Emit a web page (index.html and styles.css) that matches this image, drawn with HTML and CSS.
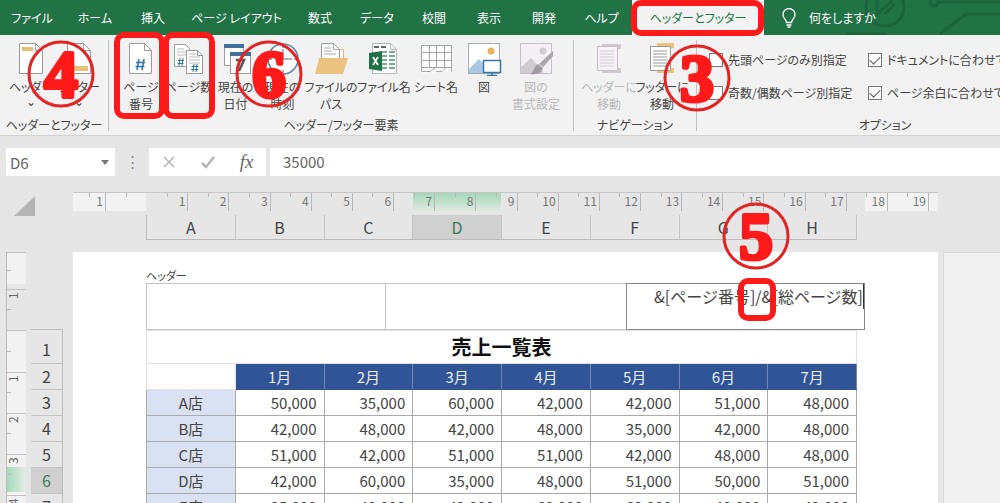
FILE: index.html
```html
<!DOCTYPE html>
<html lang="ja">
<head>
<meta charset="utf-8">
<title>売上一覧表</title>
<link rel="stylesheet" href="styles.css">
</head>
<body>
<div class="app">
  <header class="tabbar">
    <svg class="circuit" viewBox="0 0 160 35" aria-hidden="true"><g fill="none" stroke="#1c653c" stroke-width="3"><circle cx="45" cy="7" r="19"/><path d="M37 0v14l16-14M45 14l10-10M98 2h66M6 34h40M100 34l26-20h34"/><circle cx="94" cy="2" r="4"/></g></svg>
    <nav class="tabs">
      <button>ファイル</button><button>ホーム</button><button>挿入</button><button>ページ レイアウト</button><button>数式</button><button>データ</button><button>校閲</button><button>表示</button><button>開発</button><button>ヘルプ</button><button class="active">ヘッダーとフッター</button>
    </nav>
    <button class="tell">
      <svg width="14" height="20" viewBox="0 0 14 20"><path d="M4.500 14.500c0-3-3.500-4-3.500-8a6 6 0 0 1 12 0c0 4-3.500 5-3.500 8zM4.500 17h5M5.500 19h3" fill="none" stroke="#fff" stroke-width="1.300"/></svg>
      何をしますか
    </button>
  </header>

  <section class="ribbon">
    <div class="group">
      <div class="tools g1">
        <button><svg viewBox="0 0 36 34"><path d="M6.500 1.500h16l7 7v23h-23z" fill="#fff" stroke="#9a9a9a"/><path d="M22.500 1.500v7h7" fill="none" stroke="#9a9a9a"/><path d="M9 5h11v4H9z" fill="#e8bf74"/></svg>ヘッダー<i>⌄</i></button>
        <button><svg viewBox="0 0 36 34"><path d="M6.500 1.500h16l7 7v23h-23z" fill="#fff" stroke="#9a9a9a"/><path d="M22.500 1.500v7h7" fill="none" stroke="#9a9a9a"/><path d="M9 24h18v5H9z" fill="#e8bf74"/></svg>フッター<i>⌄</i></button>
      </div>
      <div class="caption">ヘッダーとフッター</div>
    </div>
    <div class="group">
      <div class="tools g2">
        <button><svg viewBox="0 0 36 34"><path d="M6.500 1.500h15l7 7v23h-22z" fill="#fff" stroke="#9a9a9a"/><path d="M21.500 1.500v7h7" fill="none" stroke="#9a9a9a"/><path d="M16 17l-2 11M21 17l-2 11M13 20.500h9M12.500 24.500h9" stroke="#2f75a8" stroke-width="1.500"/></svg>ページ<br>番号</button>
        <button><svg viewBox="0 0 36 34"><path d="M3.500 2.500h11l4 4v18h-15z" fill="#fff" stroke="#9a9a9a"/><path d="M6 7h7M6 10h9M6 13h9" stroke="#bbb"/><path d="M9 16l-1 8M12 16l-1 8M7 18.500h6M6.500 21.500h6" stroke="#2f75a8"/><path d="M15.500 8.500h11l5 5v18h-16z" fill="#fff" stroke="#9a9a9a"/><path d="M26.500 8.500v5h5" fill="none" stroke="#9a9a9a"/><path d="M18 12h7M18 15h11M18 18h11M18 21h11" stroke="#bbb"/><path d="M23 22l-1 8M26 22l-1 8M20.500 24.500h7M20 27.500h7" stroke="#2f75a8"/></svg>ページ数</button>
        <button><svg viewBox="0 0 36 34"><path d="M6.500 2.500h19v21h-19z" fill="#fff" stroke="#9a9a9a"/><path d="M6 2h20v4H6z" fill="#41719c"/><path d="M12.500 10.500h20v21h-20z" fill="#fff" stroke="#9a9a9a"/><path d="M12 10h21v4H12z" fill="#41719c"/><path d="M18 18h8l-5 11" fill="none" stroke="#555" stroke-width="2.500"/></svg>現在の<br>日付</button>
        <button><svg viewBox="0 0 36 34"><circle cx="18" cy="17" r="15" fill="#fff" stroke="#5c86ad" stroke-width="1.500"/><path d="M18 7v10h9M18 3v3M18 28v3M4 17h3M29 17h3" fill="none" stroke="#666"/></svg>現在の<br>時刻</button>
        <button><svg viewBox="0 0 36 34"><path d="M20.500 7.500h10v20h-10z" fill="#fff" stroke="#e0b878"/><path d="M8.500 1.500h12l6 6v17h-18z" fill="#fff" stroke="#9a9a9a"/><path d="M20.500 1.500v6h6M11 6h7M11 9h8M11 12h12" fill="none" stroke="#aaa"/><path d="M6 16h29l-5 16H2z" fill="#ecc280"/></svg>ファイルの<br>パス</button>
        <button><svg viewBox="0 0 36 34"><path d="M6.500 1.500h18l6 6v24h-24z" fill="#fff" stroke="#b5b5b5"/><path d="M24.500 1.500v6h6" fill="none" stroke="#b5b5b5"/><path d="M8 5h5M15 5h5" stroke="#666" stroke-width="2"/><path d="M16 10h5M23 10h6M16 14h5M23 14h6M16 18h5M23 18h6M16 22h5M23 22h6M16 26h5M23 26h6" stroke="#6fb28c" stroke-width="2"/><path d="M3 11l13-2v20L3 27z" fill="#1e7145"/><path d="M7 15l5 8M12 15l-5 8" stroke="#fff" stroke-width="1.700"/></svg>ファイル名</button>
        <button><svg viewBox="0 0 36 34"><path d="M3.500 3.500h30v22l-4 4h-5l-2-3-5 4h-4l-1-2-3 2h-6z" fill="#fff"/><path d="M3.500 29.500v-26h30v26M3.500 10.500h30M3.500 18.500h30M3.500 25.500h30M11.500 3.500v22M18.500 3.500v22M26.500 3.500v22M4 29.500h8l6-4M18 29.500h6l4-4" fill="none" stroke="#a5a5a5"/></svg>シート名</button>
        <button><svg viewBox="0 0 36 34"><path d="M2.500 1.500h31v30h-31z" fill="#fff" stroke="#aaa"/><path d="M3 27l10-10 9 9v5H3z" fill="#a9c8e6"/><circle cx="25" cy="9" r="3.500" fill="#e5b561"/><path d="M17.500 18.500h17v12h-17zM26 31v3M21 33.500h10" fill="#fff" stroke="#3576a5" stroke-width="1.500"/></svg>図</button>
        <button disabled><svg viewBox="0 0 36 34"><path d="M2.500 1.500h31v30h-31z" fill="#f3eff4" stroke="#c4c0c5"/><path d="M3 25l10-9 12 13v2H3z" fill="#cfcbd0"/><circle cx="25" cy="9" r="3.500" fill="#d0ccd1"/><path d="M35 9v5L25 25l-4-3z" fill="#aaa6ac"/><path d="M20 22l5 4c-2 6-8 7-13 6 4-2 4-8 8-10z" fill="#9f9ba1"/></svg>図の<br>書式設定</button>
      </div>
      <div class="caption">ヘッダー/フッター要素</div>
    </div>
    <div class="group">
      <div class="tools g3">
        <button disabled><svg viewBox="0 0 36 34"><path d="M11 2h19v5H11zM11 26h19v5H11z" fill="#cfcbd0"/><path d="M6.500 4.500h20v24h-20z" fill="#f5f1f6" stroke="#c4c0c5"/><path d="M9 9h14M9 12h14M9 15h14M9 18h14M9 21h14M9 24h14" stroke="#d2ced3"/></svg>ヘッダーに<br>移動</button>
        <button><svg viewBox="0 0 36 34"><path d="M13 1h17v5H13zM13 26h17v5H13z" fill="#ecc280"/><path d="M6.500 4.500h20v24h-20z" fill="#fff" stroke="#999"/><path d="M9 9h14M9 12h14M9 15h14M9 18h14M9 21h14M9 24h14" stroke="#999"/></svg>フッターに<br>移動</button>
      </div>
      <div class="caption">ナビゲーション</div>
    </div>
    <div class="group options">
      <div class="checks">
        <label><input type="checkbox">先頭ページのみ別指定</label>
        <label><input type="checkbox" checked>ドキュメントに合わせて</label>
        <label><input type="checkbox">奇数/偶数ページ別指定</label>
        <label><input type="checkbox" checked>ページ余白に合わせて</label>
      </div>
      <div class="caption">オプション</div>
    </div>
  </section>

  <section class="formula">
    <button class="namebox">D6 <span class="caret"></span></button>
    <span class="dots">⋮</span>
    <div class="fx">
      <button aria-label="キャンセル"><svg width="14" height="14" viewBox="0 0 14 14"><path d="M2 2l10 10M12 2L2 12" stroke="#b5b5b5" stroke-width="1.500"/></svg></button>
      <button aria-label="入力"><svg width="14" height="14" viewBox="0 0 14 14"><path d="M1 8l4 4 8-10" fill="none" stroke="#b5b5b5" stroke-width="2.500"/></svg></button>
      <button class="fn">fx</button>
    </div>
    <input class="value" aria-label="数式バー" value="35000">
  </section>

  <main class="sheet">
    <div class="corner"><span></span></div>
    <div class="top">
      <div class="hruler"><span>1</span><span class="bare"></span><span>1</span><span>2</span><span>3</span><span>4</span><span>5</span><span>6</span><span>7</span><span>8</span><span>9</span><span>10</span><span>11</span><span>12</span><span>13</span><span>14</span><span>15</span><span>16</span><span>17</span><span>18</span><span>19</span></div>
      <div class="cols"><span>A</span><span>B</span><span>C</span><span class="on">D</span><span>E</span><span>F</span><span>G</span><span>H</span></div>
    </div>
    <div class="side">
      <div class="vruler"><span></span><span>1</span><span></span><span>1</span><span>2</span><span>3</span><span>4</span></div>
      <div class="rows"><span>1</span><span>2</span><span>3</span><span>4</span><span>5</span><span class="on">6</span><span>7</span></div>
    </div>
    <div class="page">
      <div class="pagelabel">ヘッダー</div>
      <div class="headers">
        <div></div><div></div>
        <textarea aria-label="右側のヘッダー">&amp;[ページ番号]/&amp;[総ページ数]</textarea>
      </div>
      <table>
        <thead>
          <tr class="title"><th colspan="8">売上一覧表</th></tr>
          <tr class="months"><td></td><th>1月</th><th>2月</th><th>3月</th><th>4月</th><th>5月</th><th>6月</th><th>7月</th></tr>
        </thead>
        <tbody>
          <tr><th>A店</th><td>50,000</td><td>35,000</td><td>60,000</td><td>42,000</td><td>42,000</td><td>51,000</td><td>48,000</td></tr>
          <tr><th>B店</th><td>42,000</td><td>48,000</td><td>42,000</td><td>48,000</td><td>35,000</td><td>42,000</td><td>48,000</td></tr>
          <tr><th>C店</th><td>51,000</td><td>42,000</td><td>51,000</td><td>51,000</td><td>42,000</td><td>48,000</td><td>48,000</td></tr>
          <tr><th>D店</th><td>42,000</td><td>60,000</td><td>35,000</td><td>48,000</td><td>51,000</td><td>50,000</td><td>51,000</td></tr>
          <tr><th>E店</th><td>35,000</td><td>48,000</td><td>42,000</td><td>60,000</td><td>60,000</td><td>48,000</td><td>42,000</td></tr>
        </tbody>
      </table>
    </div>
    <div class="nextpage"></div>
  </main>

  <div class="frame f-tab"></div>
  <div class="frame f-number"></div>
  <div class="frame f-count"></div>
  <div class="frame f-slash"></div>
  <svg class="mark m3" viewBox="0 0 68 68"><circle cx="34" cy="34" r="32"/><text x="34" y="57">3</text></svg>
  <svg class="mark m4" viewBox="0 0 68 68"><circle cx="34" cy="34" r="32"/><text x="34" y="57">4</text></svg>
  <svg class="mark m5" viewBox="0 0 68 68"><circle cx="34" cy="34" r="32"/><text x="34" y="57">5</text></svg>
  <svg class="mark m6" viewBox="0 0 68 68"><circle cx="34" cy="34" r="32"/><text x="34" y="57">6</text></svg>
</div>
</body>
</html>
```
FILE: styles.css
```css
* { box-sizing: border-box; }
body {
  margin: 0;
  background: #e6e6e6;
  color: #444;
  font: 12px/17px "Noto Sans CJK JP", sans-serif;
}
button, input, textarea { font: inherit; color: inherit; border: 0; background: none; padding: 0; margin: 0; }
.app { position: relative; height: 100vh; overflow: hidden; display: flex; flex-direction: column; }

/* tabs */
.tabbar { position: relative; display: flex; flex: none; height: 35px; background: #217346; color: #fff; font-feature-settings: "palt"; }
.circuit { position: absolute; right: 0; top: 0; width: 160px; height: 35px; }
.tabs { display: grid; grid-template-columns: 64px 62px 54px 113px 54px 60px 54px 56px 54px 61px 132px; }
.tabs button { white-space: nowrap; text-align: center; }
.tabs .active { background: #f2f2f2; color: #217346; }
.tell { position: relative; display: flex; align-items: center; gap: 13px; margin-left: 18px; }

/* ribbon */
.ribbon { display: flex; flex: none; height: 101px; padding-top: 5px; background: #f2f2f2; border-bottom: 1px solid #d2d2d2; overflow: hidden; font-feature-settings: "palt"; }
.group { flex: none; height: 91px; border-right: 1px solid #c2c2c2; display: flex; flex-direction: column; justify-content: space-between; }
.group.options { border: 0; width: 376px; }
.tools { display: grid; }
.g1 { grid-template-columns: 48px 48px; padding: 0 5px 0 7px; }
.g2 { grid-template-columns: 48px 47px 47px 47px 50px 56px 48px 48px 56px; padding: 0 9px 0 8px; }
.g3 { grid-template-columns: 54px 52px; padding: 0 8px; }
.tools button { display: flex; flex-direction: column; align-items: center; white-space: nowrap; text-align: center; line-height: 17px; padding-top: 2px; }
.tools svg { width: 36px; height: 34px; margin-bottom: 2px; }
.tools button:disabled { color: #b8b8b8; }
.tools i { font-style: normal; line-height: 12px; }
.caption { text-align: center; line-height: 12px; }
.checks { display: grid; grid-template-columns: 159px 1fr; row-gap: 16px; padding: 11px 0 0 12px; }
.checks label { display: flex; align-items: center; gap: 5px; white-space: nowrap; }
.checks input { appearance: none; width: 14px; height: 14px; border: 1px solid #777; background: #fff; display: grid; place-items: center; }
.checks input:checked::before { content: ""; width: 9px; height: 5px; border: solid #555; border-width: 0 0 1px 1px; rotate: -45deg; translate: 0 -1px; }

/* formula bar */
.formula { display: flex; flex: none; padding-top: 12px; padding-left: 6px; height: 56px; align-items: flex-start; font-size: 15px; color: #666; }
.formula > * { height: 28px; }
.namebox { display: flex; width: 109px; align-items: center; justify-content: space-between; background: #fff; padding: 0 6px 0 4px; }
.caret { border: 4px solid transparent; border-top: 5px solid #777; border-bottom: 0; }
.dots { width: 34px; text-align: center; line-height: 26px; color: #888; }
.fx { display: grid; grid-template-columns: repeat(3, 1fr); width: 117px; background: #fff; margin-right: 4px; }
.fx button { display: grid; place-items: center; }
.fx .fn { font: italic 19px "Liberation Serif", serif; }
.value { flex: 1; min-width: 0; background: #fff; padding: 0 13px 2px; }

/* sheet */
.sheet { flex: 1; min-height: 0; display: grid; grid-template: 60px 1fr / 73px 865px 1fr; }
.corner { padding: 4px 0 0 14px; }
.corner span { display: block; width: 21px; height: 20px; background: #b4b4b4; clip-path: polygon(100% 0, 100% 100%, 0 100%); }
.top { grid-column: 2 / 4; width: 865px; }
.hruler {
  display: grid; grid-template-columns: 33px repeat(20, 1fr) 9px; height: 19px; border-top: 1px solid #c6c6c6;
  background: linear-gradient(#a6d8ba, #dfe8e2) 340px 0 / 88px 100% no-repeat,
    linear-gradient(90deg, #f2f2f2 73px, transparent 73px, transparent 792px, #f2f2f2 792px);
}
.hruler span { border-right: 1px solid #b8b8b8; text-align: right; padding-right: 2px; font-size: 12px; line-height: 15px; color: #777; background: linear-gradient(#b8b8b8, #b8b8b8) 50% 0 / 1px 4px no-repeat; }
.hruler .bare { border: 0; }
.cols { display: grid; grid-template-columns: repeat(8, 1fr); margin: 4px 81px 0 73px; height: 25px; border-left: 1px solid #bbb; border-bottom: 1px solid #bbb; font-size: 16px; line-height: 24px; text-align: center; }
.cols span { border-right: 1px solid #c4c4c4; }
.cols .on, .rows .on { background: #d0d0d0; color: #3d7a58; }
.side { display: grid; grid-template-columns: 20px 32px; column-gap: 5px; padding-left: 6px; overflow: hidden; }
.vruler {
  display: grid; grid-template-rows: 37px 41px 42px 41px 41px 41px 41px; border-left: 1px solid #bbb;
  background: linear-gradient(90deg, #a6d8ba, #e6ece8) 0 215px / 100% 25px no-repeat,
    linear-gradient(#f2f2f2 32px, transparent 32px, transparent 78px, #f2f2f2 78px);
}
.vruler span { writing-mode: vertical-rl; rotate: 180deg; text-align: right; font-size: 12px; line-height: 12px; padding-bottom: 2px; color: #666; border-bottom: 1px solid #c2c2c2; background: linear-gradient(#b8b8b8, #b8b8b8) 100% 50% / 4px 1px no-repeat; }
.rows { display: grid; grid-template-rows: 34px 26px 26px 26px 26px 26px 26px; margin-top: 77px; height: 190px; border: solid #bbb; border-width: 1px 1px 0 0; text-align: center; font-size: 16px; line-height: 25px; }
.rows span { border-bottom: 1px solid #c4c4c4; }
.rows span:first-child { padding-top: 7px; }
.page { background: #fff; padding-left: 73px; color: #444; overflow: hidden; }
.pagelabel { padding-top: 15px; height: 31px; font-size: 11px; line-height: 16px; font-feature-settings: "palt"; }
.headers { display: grid; grid-template-columns: 239px 241px 239px; height: 47px; }
.headers div { border: 1px solid #c4c4c4; border-right: 0; }
.headers textarea { border: 1px solid #888; background: linear-gradient(#333, #333) 100% 0 / 1px 25px no-repeat; resize: none; overflow: hidden; text-align: right; font-size: 16px; line-height: 24px; white-space: nowrap; padding-right: 1px; }
table { width: 711px; table-layout: fixed; border-collapse: collapse; font-size: 15px; line-height: 24px; }
th, td { border: 1px solid #aaa; height: 26px; padding: 0; font-weight: 400; }
tbody td { text-align: right; padding-right: 7px; }
tbody th { background: #d9e1f2; }
.title th { height: 33px; font-size: 20px; font-weight: 700; color: #111; border-color: #e2e2e2; }
.months td { border-color: #e2e2e2; }
.months th { background: #305496; color: #e8edf5; border-color: #305496 #7387ac; }
.nextpage { margin-left: 5px; background: #f0f0f0; border: 1px solid #d8d8d8; border-width: 1px 0 0 1px; }

/* annotations */
.frame { position: absolute; border: 6px solid #ff1a1a; border-radius: 10px; }
.f-tab { left: 631px; top: 0; width: 133px; height: 36px; }
.f-number { left: 114px; top: 32px; width: 51px; height: 87px; }
.f-count { left: 163px; top: 32px; width: 52px; height: 87px; }
.f-slash { left: 738px; top: 278px; width: 38px; height: 43px; }
.mark { position: absolute; width: 68px; height: 68px; }
.mark circle { fill: none; stroke: #e32424; stroke-width: 3px; }
.mark text { font: 700 68px "Liberation Serif", serif; text-anchor: middle; fill: #ff1a1a; stroke: #ff1a1a; stroke-width: 4px; stroke-linejoin: round; }
.m3 { left: 663px; top: 44px; }
.m4 { left: 27px; top: 40px; }
.m5 { left: 722px; top: 202px; }
.m6 { left: 235px; top: 40px; }
```
